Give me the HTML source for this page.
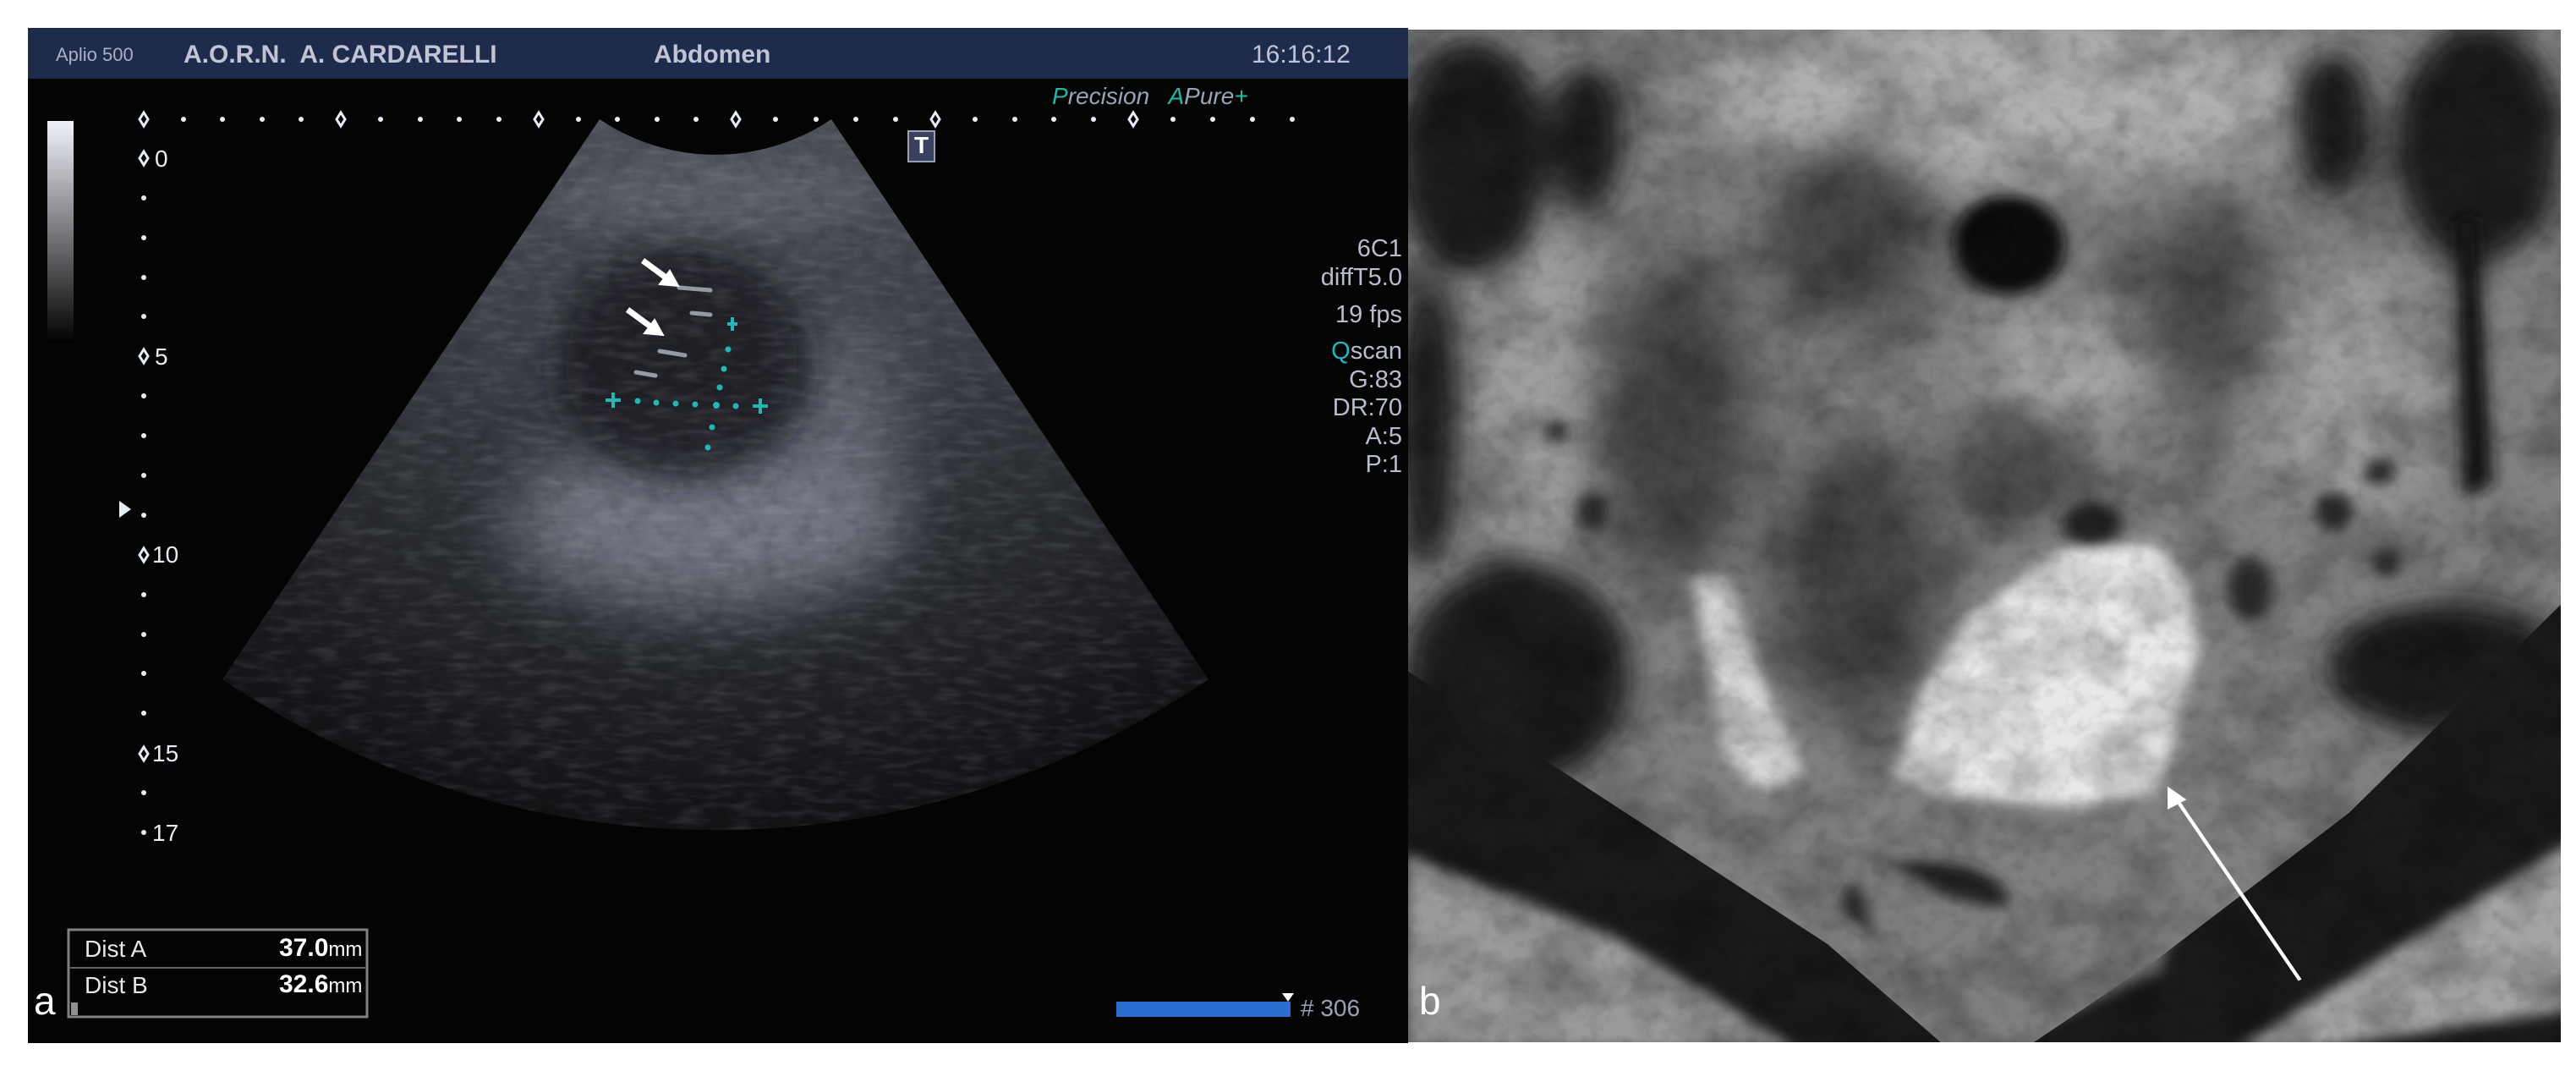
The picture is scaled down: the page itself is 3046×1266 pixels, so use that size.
<!DOCTYPE html>
<html><head><meta charset="utf-8"><style>
html,body{margin:0;padding:0;background:#fff;width:3046px;height:1266px;overflow:hidden;position:relative}
.t{position:absolute;font-family:"Liberation Sans Narrow","Liberation Sans",sans-serif;white-space:nowrap;line-height:1}
</style></head><body>
<svg width="3046" height="1266" style="position:absolute;left:0;top:0">
<defs>
<filter id="n1" x="0" y="0" width="100%" height="100%">
<feTurbulence type="fractalNoise" baseFrequency="0.03 0.12" numOctaves="2" seed="3"/>
<feColorMatrix type="matrix" values="0 0 0 0 0.8  0 0 0 0 0.82  0 0 0 0 0.88  1.4 0 0 0 -0.6"/>
</filter>
<filter id="n2" x="0" y="0" width="100%" height="100%">
<feTurbulence type="fractalNoise" baseFrequency="0.05" numOctaves="3" seed="7"/>
<feColorMatrix type="matrix" values="0 0 0 0 0  0 0 0 0 0  0 0 0 0 0  1.2 0 0 0 -0.55"/>
</filter>
<filter id="n3" x="0" y="0" width="100%" height="100%">
<feTurbulence type="fractalNoise" baseFrequency="0.012" numOctaves="3" seed="11"/>
<feColorMatrix type="matrix" values="0 0 0 0 0  0 0 0 0 0  0 0 0 0 0  1.6 0 0 0 -0.6"/>
</filter>
<filter id="b20" x="-50%" y="-50%" width="200%" height="200%"><feGaussianBlur stdDeviation="20"/></filter>
<filter id="b10" x="-50%" y="-50%" width="200%" height="200%"><feGaussianBlur stdDeviation="10"/></filter>
<filter id="b40" x="-50%" y="-50%" width="200%" height="200%"><feGaussianBlur stdDeviation="40"/></filter>
<clipPath id="sec"><path d="M709,141 L263,803 A1043,1043 0 0 0 1429,803 L983,141 A245,245 0 0 1 709,141 Z"/></clipPath>
<clipPath id="mri"><rect x="1665" y="35" width="1363" height="1197"/></clipPath>
<radialGradient id="sg" cx="846" cy="-62" r="1043" gradientUnits="userSpaceOnUse">
<stop offset="0.23" stop-color="#4c4f56"/><stop offset="0.5" stop-color="#3e4148"/><stop offset="0.8" stop-color="#25272c"/><stop offset="1" stop-color="#121315"/>
</radialGradient>
<linearGradient id="gb" x1="0" y1="0" x2="0" y2="1"><stop offset="0" stop-color="#f0f2fa"/><stop offset="1" stop-color="#000"/></linearGradient>
</defs>
<rect x="33" y="33" width="1632" height="1200" fill="#040404"/>
<rect x="33" y="33" width="1632" height="60" fill="#1f2b4d"/>
<g clip-path="url(#sec)">
<rect x="200" y="100" width="1300" height="900" fill="url(#sg)"/>
<ellipse cx="830" cy="620" rx="230" ry="100" fill="#8a909c" opacity="0.7" filter="url(#b40)"/>
<ellipse cx="1000" cy="520" rx="60" ry="130" fill="#7a808c" opacity="0.6" filter="url(#b40)"/>
<ellipse cx="806" cy="430" rx="150" ry="140" fill="#16181c" opacity="0.75" filter="url(#b20)"/>
<ellipse cx="846" cy="230" rx="200" ry="40" fill="#6a6e78" opacity="0.5" filter="url(#b20)"/>
<rect x="200" y="100" width="1300" height="900" filter="url(#n1)" opacity="0.18"/>
<rect x="200" y="100" width="1300" height="900" filter="url(#n2)" opacity="0.25"/>
<g stroke="#c8ccd8" stroke-width="5" stroke-linecap="round" opacity="0.7">
<line x1="803" y1="340" x2="840" y2="343"/><line x1="818" y1="370" x2="840" y2="372"/><line x1="780" y1="415" x2="810" y2="420"/><line x1="752" y1="440" x2="775" y2="444"/>
</g>
</g>
<g stroke="#fff" stroke-width="7" fill="#fff">
<line x1="760" y1="308" x2="790" y2="330"/><polygon points="802,338 780,336 792,320" stroke-width="2"/>
<line x1="742" y1="366" x2="772" y2="388"/><polygon points="784,396 762,394 774,378" stroke-width="2"/>
</g>
<g fill="#25b5b5" stroke="#25b5b5">
<path d="M716,473h18M725,464v18M890,480h18M899,471v18M860,383h12M866,375v16" stroke-width="4" fill="none"/>
<circle cx="754" cy="474" r="3"/><circle cx="776" cy="476" r="3"/><circle cx="799" cy="477" r="3"/><circle cx="822" cy="478" r="3"/><circle cx="847" cy="479" r="3.5"/><circle cx="870" cy="480" r="3"/>
<circle cx="861" cy="413" r="3"/><circle cx="856" cy="436" r="3"/><circle cx="851" cy="458" r="3"/><circle cx="842" cy="505" r="3"/><circle cx="837" cy="529" r="3"/>
</g>
<g fill="#e8ecf4" stroke="#e8ecf4">
<rect x="56" y="143" width="31" height="263" fill="url(#gb)" stroke="none"/>
<g fill="none" stroke-width="3">
<path d="M170,133l5,8l-5,8l-5,-8z M403,133l5,8l-5,8l-5,-8z M637,133l5,8l-5,8l-5,-8z M870,133l5,8l-5,8l-5,-8z M1106,133l5,8l-5,8l-5,-8z M1340,133l5,8l-5,8l-5,-8z"/>
<path d="M170,179l5,8l-5,8l-5,-8z M170,413l5,8l-5,8l-5,-8z M170,648l5,8l-5,8l-5,-8z M170,883l5,8l-5,8l-5,-8z"/>
</g>
<g stroke="none">
<circle cx="217" cy="141" r="3"/><circle cx="263" cy="141" r="3"/><circle cx="310" cy="141" r="3"/><circle cx="356" cy="141" r="3"/>
<circle cx="450" cy="141" r="3"/><circle cx="497" cy="141" r="3"/><circle cx="543" cy="141" r="3"/><circle cx="590" cy="141" r="3"/>
<circle cx="684" cy="141" r="3"/><circle cx="730" cy="141" r="3"/><circle cx="777" cy="141" r="3"/><circle cx="823" cy="141" r="3"/>
<circle cx="917" cy="141" r="3"/><circle cx="965" cy="141" r="3"/><circle cx="1012" cy="141" r="3"/><circle cx="1059" cy="141" r="3"/>
<circle cx="1153" cy="141" r="3"/><circle cx="1200" cy="141" r="3"/><circle cx="1246" cy="141" r="3"/><circle cx="1293" cy="141" r="3"/>
<circle cx="1387" cy="141" r="3"/><circle cx="1434" cy="141" r="3"/><circle cx="1481" cy="141" r="3"/><circle cx="1528" cy="141" r="3"/>
<circle cx="170" cy="234" r="3"/><circle cx="170" cy="281" r="3"/><circle cx="170" cy="328" r="3"/><circle cx="170" cy="374" r="3"/>
<circle cx="170" cy="468" r="3"/><circle cx="170" cy="515" r="3"/><circle cx="170" cy="562" r="3"/><circle cx="170" cy="609" r="3"/>
<circle cx="170" cy="703" r="3"/><circle cx="170" cy="750" r="3"/><circle cx="170" cy="796" r="3"/><circle cx="170" cy="843" r="3"/>
<circle cx="170" cy="937" r="3"/><circle cx="170" cy="984" r="3"/>
<polygon points="141,592 155,602 141,612"/>
</g>
</g>
<rect x="1074" y="155" width="31" height="36" fill="#3a4060" stroke="#9aa0b8" stroke-width="2"/>
<rect x="81" y="1099" width="353" height="103" fill="none" stroke="#808080" stroke-width="3"/>
<line x1="83" y1="1144" x2="432" y2="1144" stroke="#606060" stroke-width="2"/>
<rect x="84" y="1185" width="8" height="15" fill="#909090"/>
<rect x="1320" y="1184" width="206" height="18" fill="#2a6fd0"/>
<polygon points="1516,1174 1530,1174 1523,1184" fill="#fff"/>
<g clip-path="url(#mri)">
<svg x="1660" y="30" width="1386" height="1210" viewBox="0 0 1550 1560" preserveAspectRatio="none">
<rect x="0" y="0" width="1550" height="1560" fill="#808080"/>
<ellipse cx="800" cy="110" rx="420" ry="140" fill="#b0b0b0" filter="url(#b40)"/>
<ellipse cx="880" cy="520" rx="120" ry="90" fill="#a8a8a8" filter="url(#b40)"/>
<ellipse cx="1250" cy="560" rx="120" ry="200" fill="#a0a0a0" filter="url(#b40)"/>
<ellipse cx="180" cy="550" rx="90" ry="250" fill="#a0a0a0" filter="url(#b40)"/>
<g fill="#1e1e1e" filter="url(#b20)">
<ellipse cx="90" cy="200" rx="100" ry="180"/><ellipse cx="240" cy="170" rx="50" ry="110"/>
<ellipse cx="1420" cy="180" rx="110" ry="180"/><ellipse cx="1230" cy="150" rx="50" ry="110"/>
<ellipse cx="30" cy="600" rx="40" ry="220"/>
<ellipse cx="150" cy="990" rx="150" ry="170"/>
<ellipse cx="1380" cy="980" rx="160" ry="100"/>
</g>
<g fill="#444" filter="url(#b40)">
<ellipse cx="590" cy="320" rx="110" ry="140"/><ellipse cx="360" cy="600" rx="100" ry="250"/>
<ellipse cx="600" cy="850" rx="110" ry="220"/><ellipse cx="1060" cy="420" rx="70" ry="160"/>
<ellipse cx="800" cy="680" rx="80" ry="80"/>
</g>
<g fill="#2a2a2a" filter="url(#b10)">
<ellipse cx="200" cy="620" rx="14" ry="18"/><ellipse cx="250" cy="740" rx="22" ry="30"/><ellipse cx="1230" cy="740" rx="26" ry="30"/><ellipse cx="1300" cy="820" rx="20" ry="22"/>
<ellipse cx="1120" cy="860" rx="30" ry="50"/><ellipse cx="1290" cy="680" rx="20" ry="22"/>
</g>
<ellipse cx="800" cy="335" rx="75" ry="75" fill="#111" filter="url(#b10)"/>
<ellipse cx="910" cy="760" rx="40" ry="35" fill="#222" filter="url(#b10)"/>
<ellipse cx="690" cy="1335" rx="110" ry="60" fill="#222" filter="url(#b10)"/>
<path d="M1420,290 L1440,700 L1400,720 L1390,300Z" fill="#181818" filter="url(#b10)"/>
<path d="M0,980 L560,1400 L720,1560 L0,1560Z" fill="#1a1a1a"/>
<path d="M1550,860 L1550,1560 L820,1560 L1000,1420 L1250,1200Z" fill="#1a1a1a"/>
<path d="M0,1260 L280,1390 L520,1560 L0,1560Z" fill="#9a9a9a" filter="url(#b10)"/>
<path d="M1550,1240 L1550,1500 L1200,1560 L1100,1560 L1350,1380Z" fill="#a4a4a4" filter="url(#b10)"/>
<path d="M560,1180 Q800,1500 1060,1200 L1000,1440 L850,1520 L650,1480 Z" fill="#7e7e7e" filter="url(#b10)"/>
<path d="M380,840 L425,840 L475,1000 L530,1140 L470,1165 L425,1110Z" fill="#d8d8d8" filter="url(#b10)"/>
<path d="M650,1140 L690,1000 L750,900 L870,800 L990,790 L1040,850 L1050,950 L1020,1080 L1000,1165 L900,1190 L700,1175Z" fill="#e8e8e8" filter="url(#b10)"/>
<rect width="1550" height="1560" filter="url(#n3)" opacity="0.35"/>
<rect width="1550" height="1560" filter="url(#n2)" opacity="0.2"/>
<line x1="1185" y1="1455" x2="1022" y2="1180" stroke="#fff" stroke-width="5"/>
<polygon points="1010,1160 1010,1195 1035,1180" fill="#fff"/>
</svg>
</g>
</svg>
<div class="t" style="left:66px;top:54px;font-size:22px;color:#aab0c4">Aplio 500</div>
<div class="t" style="left:217px;top:50px;font-size:30px;font-weight:bold;color:#c0c4d4">A.O.R.N.&nbsp; A. CARDARELLI</div>
<div class="t" style="left:773px;top:50px;font-size:30px;font-weight:bold;color:#c0c4d4">Abdomen</div>
<div class="t" style="left:1480px;top:50px;font-size:30px;color:#c0c4d4">16:16:12</div>
<div class="t" style="left:1244px;top:100px;font-size:28px;font-style:italic;color:#9aa4b8"><span style="color:#20b8a8">P</span>recision&nbsp;&nbsp; <span style="color:#20b8a8">A</span>Pure<span style="color:#20b8a8">+</span></div>
<div class="t" style="left:1081px;top:158px;font-size:28px;font-weight:bold;color:#fff">T</div>
<div class="t" style="left:183px;top:174px;font-size:28px;color:#e8ecf4">0</div>
<div class="t" style="left:183px;top:408px;font-size:28px;color:#e8ecf4">5</div>
<div class="t" style="left:180px;top:642px;font-size:28px;color:#e8ecf4">10</div>
<div class="t" style="left:180px;top:877px;font-size:28px;color:#e8ecf4">15</div>
<div class="t" style="left:180px;top:971px;font-size:28px;color:#e8ecf4">17</div>
<div class="t" style="right:1388px;top:278px;font-size:29px;color:#b8bccc;text-align:right;line-height:33.5px">6C1<br>diffT5.0<br><span style="line-height:54px">19 fps</span><br><span style="color:#20b8c0">Q</span>scan<br>G:83<br>DR:70<br>A:5<br>P:1</div>
<div class="t" style="left:100px;top:1108px;font-size:28px;color:#e8e8e8">Dist A</div>
<div class="t" style="left:330px;top:1106px;font-size:30px;color:#fff;font-weight:bold">37.0<span style="font-size:24px;font-weight:normal">mm</span></div>
<div class="t" style="left:100px;top:1151px;font-size:28px;color:#e8e8e8">Dist B</div>
<div class="t" style="left:330px;top:1149px;font-size:30px;color:#fff;font-weight:bold">32.6<span style="font-size:24px;font-weight:normal">mm</span></div>
<div class="t" style="left:40px;top:1160px;font-size:46px;color:#fff;font-family:'Liberation Sans',sans-serif">a</div>
<div class="t" style="left:1538px;top:1178px;font-size:28px;color:#9aa0b8">#&nbsp;306</div>
<div class="t" style="left:1678px;top:1160px;font-size:46px;color:#fff;font-family:'Liberation Sans',sans-serif">b</div>
</body></html>
